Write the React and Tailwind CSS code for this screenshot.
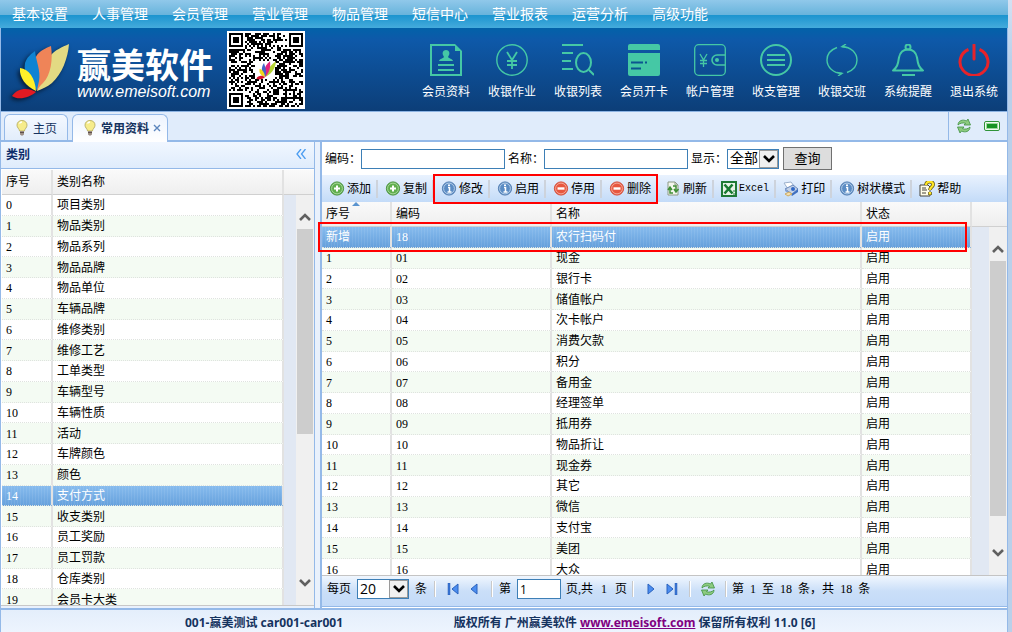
import { useState } from "react";
import clsx from "clsx";

const MENU = ["基本设置", "人事管理", "会员管理", "营业管理", "物品管理", "短信中心", "营业报表", "运营分析", "高级功能"];

const CATEGORIES = [
  "项目类别", "物品类别", "物品系列", "物品品牌", "物品单位", "车辆品牌", "维修类别",
  "维修工艺", "工单类型", "车辆型号", "车辆性质", "活动", "车牌颜色", "颜色", "支付方式",
  "收支类别", "员工奖励", "员工罚款", "仓库类别", "会员卡大类",
];

const PAYMENTS = [
  ["新增", "18", "农行扫码付"],
  ["1", "01", "现金"],
  ["2", "02", "银行卡"],
  ["3", "03", "储值帐户"],
  ["4", "04", "次卡帐户"],
  ["5", "05", "消费欠款"],
  ["6", "06", "积分"],
  ["7", "07", "备用金"],
  ["8", "08", "经理签单"],
  ["9", "09", "抵用券"],
  ["10", "10", "物品折让"],
  ["11", "11", "现金券"],
  ["12", "12", "其它"],
  ["13", "13", "微信"],
  ["14", "14", "支付宝"],
  ["15", "15", "美团"],
  ["16", "16", "大众"],
];

/* ---------- header drawings ---------- */

function Petals({ className }) {
  return (
    <svg viewBox="0 0 60 58" className={className} aria-hidden="true">
      <path d="M28 50C32 36 32 24 41 15 46 9 53 6 60 3 59 17 53 33 43 42 38 46 33 48 28 50Z" fill="#e3da83" />
      <path d="M28 50C24 38 22 22 28 14 32 9 37 7 42 5 44 18 42 34 34 42 31 45 29 47 28 50Z" fill="#ef8458" />
      <path d="M28 49C20 42 14 32 16 22 18 16 22 13 26 10 27 20 32 30 30 40Z" fill="#0e83d2" />
      <path d="M27 50C17 45 10 37 11 27 20 28 26 37 27 50Z" fill="#fff02a" />
      <path d="M27 51C19 46 8 47 3 55 10 60 21 56 27 51Z" fill="#e21a22" />
    </svg>
  );
}

const QR_SIZE = 37;

function finderAt(x, y, fx, fy) {
  const dx = Math.abs(x - fx - 3);
  const dy = Math.abs(y - fy - 3);
  const d = Math.max(dx, dy);
  if (d > 4) return null;
  return d === 3 || d <= 1;
}

function qrPath() {
  let d = "";
  let seed = 2027;
  const far = QR_SIZE - 7;
  for (let y = 0; y < QR_SIZE; y++) {
    for (let x = 0; x < QR_SIZE; x++) {
      seed = (seed * 1103515245 + 12345) % 2147483648;
      let on = seed / 2147483648 > 0.49;
      const finder = finderAt(x, y, 0, 0) ?? finderAt(x, y, far, 0) ?? finderAt(x, y, 0, far);
      const align = Math.max(Math.abs(x - 30), Math.abs(y - 30));
      if (finder !== null) on = finder;
      else if (align <= 2) on = align !== 1;
      else if (x === 6 || y === 6) on = (x + y) % 2 === 0;
      if (x > 12 && x < 23 && y > 13 && y < 23) on = false;
      if (on) d += `M${x} ${y}h1v1h-1z`;
    }
  }
  return d;
}

function QrCode() {
  return (
    <div className="relative size-[78px] shrink-0 bg-white p-0.5">
      <svg viewBox="0 0 37 37" className="size-full" shapeRendering="crispEdges" role="img" aria-label="二维码">
        <path d={qrPath()} fill="#000" />
      </svg>
      <svg viewBox="0 0 60 58" className="absolute top-[29px] left-[29px] size-5" aria-hidden="true">
        <path d="M28 50C36 36 36 18 60 3 59 17 53 38 28 50Z" fill="#b5d334" />
        <path d="M28 50C24 38 22 18 42 3 44 18 42 34 28 50Z" fill="#e5247d" />
        <path d="M28 49C16 40 14 22 24 8 27 20 34 32 28 49Z" fill="#4565c8" />
        <path d="M27 50C14 45 8 37 11 25 20 28 26 37 27 50Z" fill="#f2d81c" />
        <path d="M27 51C19 44 6 45 1 55 10 60 21 56 27 51Z" fill="#d3122b" />
      </svg>
    </div>
  );
}

const GREEN = "#45c8a5";

const QUICK = [
  {
    label: "会员资料",
    icon: (
      <g fill="none" stroke={GREEN} strokeWidth="2">
        <path d="M25 1H1v30h30V7" />
        <path d="M25 0v7h7z" fill={GREEN} stroke="none" />
        <path d="M16 6c3 0 4 3 3 5l-1 2c1 2 4 1 5 4H9c1-3 4-2 5-4l-1-2c-1-2 0-5 3-5z" fill={GREEN} stroke="none" />
        <path d="M8 21h16M8 26h16" />
      </g>
    ),
  },
  {
    label: "收银作业",
    icon: (
      <g fill="none" stroke={GREEN}>
        <circle cx="16" cy="16" r="15.2" strokeWidth="1.4" />
        <path d="M11 8l5 8 5-8M16 16v9M11 17h10M11 21h10" strokeWidth="1.8" />
      </g>
    ),
  },
  {
    label: "收银列表",
    icon: (
      <g fill="none" stroke={GREEN} strokeWidth="2">
        <path d="M0 1h21M0 9h11M0 17h9M0 25h11" />
        <ellipse cx="21.500" cy="18.500" rx="7.500" ry="9.500" />
        <path d="M27 26l5 5" />
      </g>
    ),
  },
  {
    label: "会员开卡",
    icon: (
      <g>
        <path d="M2 0h28a2 2 0 0 1 2 2v4H0V2a2 2 0 0 1 2-2zM0 9h32v21a2 2 0 0 1-2 2H2a2 2 0 0 1-2-2z" fill={GREEN} />
        <path d="M3 18.500h12M17 18.500h2M3 24.500h10" stroke="#0b5590" strokeWidth="2" />
      </g>
    ),
  },
  {
    label: "帐户管理",
    icon: (
      <g fill="none" stroke={GREEN} strokeWidth="1.3">
        <rect x="0.700" y="0.700" width="30.600" height="30.600" rx="4" />
        <path d="M31 11h-8a5 5 0 0 0 0 10h8" strokeWidth="1.6" />
        <circle cx="23" cy="16" r="2" fill={GREEN} stroke="none" />
        <path d="M6 10l3.500 6 3.500-6M9.500 16v7M6 16.500h7M6 19.500h7" />
      </g>
    ),
  },
  {
    label: "收支管理",
    icon: (
      <g fill="none" stroke={GREEN} strokeWidth="2">
        <circle cx="16" cy="16" r="15" />
        <path d="M7 11h18M7 16h18M7 21h18" />
      </g>
    ),
  },
  {
    label: "收银交班",
    icon: (
      <g fill="none" stroke={GREEN} strokeWidth="1.400">
        <path d="M11 3.500C4 6 1 11 1 16c0 7 6 13 15 13.500M21 28.500c7-2.500 10-7.500 10-12.500C31 9 25 3 16 2.500" />
        <path d="M20 0l-4 2.600 5 1M12 32l4-2.600-5-1" />
      </g>
    ),
  },
  {
    label: "系统提醒",
    icon: (
      <g fill="none" stroke={GREEN} strokeWidth="2">
        <circle cx="16" cy="3" r="2.500" />
        <path d="M1 26.500c4-3 5-6 6-13 1-5 4-8 9-8s8 3 9 8c1 7 2 10 6 13z" strokeLinejoin="round" />
        <path d="M10 31h13" />
      </g>
    ),
  },
  {
    label: "退出系统",
    icon: (
      <g fill="none" stroke="#e8232a" strokeWidth="3">
        <path d="M10.500 5.500a14 13.500 0 1 0 11 0" />
        <path d="M16 1v14" strokeLinecap="round" />
      </g>
    ),
  },
];

/* ---------- 16px icons ---------- */

function Icon16({ children }) {
  return (
    <svg viewBox="0 0 16 16" className="size-4 shrink-0" aria-hidden="true">
      {children}
    </svg>
  );
}

const AddIcon = () => (
  <Icon16>
    <circle cx="8" cy="7.500" r="6.600" fill="#5fae4d" stroke="#4b9440" />
    <circle cx="8" cy="7.500" r="5.400" fill="none" stroke="#a8d79b" />
    <path d="M8 4.500v6M5 7.500h6" stroke="#fff" strokeWidth="2" />
  </Icon16>
);

const InfoIcon = () => (
  <Icon16>
    <circle cx="8" cy="7.500" r="6.600" fill="#5b8cc4" stroke="#5580b4" />
    <circle cx="8" cy="7.500" r="5.400" fill="none" stroke="#b4cde8" />
    <path d="M7 6.500h1.500V11M6.500 11h4M7 4.200h2" stroke="#fff" strokeWidth="1.500" fill="none" />
  </Icon16>
);

const StopIcon = () => (
  <Icon16>
    <circle cx="8" cy="7.500" r="6.600" fill="#e8573f" stroke="#d4503c" />
    <circle cx="8" cy="7.500" r="5.400" fill="none" stroke="#f5a899" />
    <path d="M4.500 7.500h7" stroke="#fff" strokeWidth="2.400" />
  </Icon16>
);

const ReloadIcon = () => (
  <Icon16>
    <path d="M3 1h7l3 3v10H3z" fill="#f3f6ee" stroke="#8d9a84" />
    <path d="M10 1v3h3" fill="none" stroke="#8d9a84" />
    <path d="M8 12H5V7M3 9l2-3 2 3M8 5h3v5M9 8l2 3 2.500-3" fill="none" stroke="#3f8e35" strokeWidth="1.500" />
  </Icon16>
);

const ExcelIcon = () => (
  <Icon16>
    <path d="M0 0h16v16H0z" fill="#1f7a36" />
    <path d="M2 2h12v12H2z" fill="#e8f3e8" />
    <path d="M3.500 3.500l8 9M11.500 3.500l-8 9" stroke="#187a30" strokeWidth="2.600" />
    <path d="M12 10h3M12 13h3" stroke="#1f7a36" />
  </Icon16>
);

const PrintIcon = () => (
  <Icon16>
    <path d="M1 2l7-1 3 4-6 3z" fill="#fff" stroke="#9bb0cc" />
    <path d="M2 8l8-4 5 4-6 5z" fill="#c4d2e8" stroke="#6787bb" />
    <path d="M9 13l6-5v3l-6 4z" fill="#3e6fc0" />
    <path d="M2 8l7 5v2L2 10z" fill="#7fa0d6" />
    <path d="M2 13l4-2 3 2-4 2z" fill="#f4dfae" stroke="#ceab62" />
    <circle cx="10" cy="8" r="2" fill="#3068c6" />
  </Icon16>
);

const HelpIcon = () => (
  <Icon16>
    <path d="M1 4h8l2 2v9H1z" fill="#fffde8" stroke="#44433a" />
    <path d="M3 7h4M3 9h5M3 12h4" stroke="#44433a" />
    <path d="M7 4c0-5 8-4 7 0-.5 2-3 2.500-3 5M11 11v3" fill="none" stroke="#5c5210" strokeWidth="3.600" />
    <path d="M7 4c0-5 8-4 7 0-.5 2-3 2.500-3 5M11 11v2.500" fill="none" stroke="#ffe526" strokeWidth="2.200" />
  </Icon16>
);

const CycleIcon = () => (
  <Icon16>
    <path d="M2 7C2 2.500 7 1 10.500 3L12 1l2.500 6H8l1.500-1.700C7 4.500 4 5 2 7z" fill="#8dcb80" stroke="#3f9140" strokeWidth="0.800" />
    <path d="M14 9c0 4.500-5 6-8.500 4L4 15 1.500 9H8l-1.500 1.700c2.500.8 5.500.3 7.500-1.700z" fill="#8dcb80" stroke="#3f9140" strokeWidth="0.800" />
  </Icon16>
);

const BulbIcon = () => (
  <Icon16>
    <path d="M8 .5c3 0 5 2 5 4.700 0 2.500-2.300 3.500-2.600 5.800H5.600C5.300 8.700 3 7.700 3 5.200 3 2.500 5 .5 8 .5z" fill="#f6ec8b" stroke="#bdb56c" />
    <path d="M5.500 3.500c.6-1.200 1.500-1.500 2.500-1.500" stroke="#fff" strokeWidth="1.500" fill="none" />
    <path d="M6 11h4v3.500c-1 1.500-3 1.500-4 0z" fill="#9c8f86" />
    <path d="M6 12.500h4" stroke="#5d504b" />
  </Icon16>
);

function PageIcon({ bar, flip }) {
  return (
    <svg viewBox="0 0 12 12" className={clsx("size-3", flip && "-scale-x-100")} aria-hidden="true">
      {bar && <path d="M1 0h2v12H1z" fill="#3a78d8" stroke="#285bb0" strokeWidth="0.500" />}
      <path d={bar ? "M11 1v10L5 6z" : "M9 1v10L3 6z"} fill="#4b8df0" stroke="#2a62bd" />
    </svg>
  );
}

function Chevron({ up }) {
  return (
    <svg viewBox="0 0 12 8" className="h-2 w-3" aria-hidden="true">
      <path d={up ? "M1 7l5-5 5 5" : "M1 1l5 5 5-5"} fill="none" stroke="currentColor" strokeWidth="2.600" />
    </svg>
  );
}

/* ---------- shared pieces ---------- */

function SelectBox({ id, value, className }) {
  return (
    <div className={clsx("relative h-5 border border-[#3d7fb6] bg-white", className)}>
      <select id={id} defaultValue={value} className="block size-full appearance-none pl-0.5 text-sm leading-[18px] outline-none">
        <option>{value}</option>
      </select>
      <span className="pointer-events-none absolute inset-y-0 right-0 flex w-[19px] items-center justify-center border border-[#9a9a9a] bg-[#f0f0f0] text-black">
        <Chevron />
      </span>
    </div>
  );
}

// strip to the right of a grid: header cap, filler column and scroll bar
function ScrollSide({ thumb, className }) {
  return (
    <div className={clsx("flex shrink-0 flex-col", className)}>
      <div className="h-[25px] border-b border-[#d0d0d0] bg-gradient-to-b from-[#fafafa] to-[#eeeeee]" />
      <div className="flex flex-1 justify-end bg-[#e1e8f3]">
        <div className="flex w-[18px] flex-col bg-[#f0f0f0] px-px py-2.5 text-[#606060]">
          <button aria-label="向上" className="flex h-6 items-center justify-center">
            <Chevron up />
          </button>
          <div className="flex-1">
            <div className="bg-[#cdcdcd]" style={{ height: `${thumb}%` }} />
          </div>
          <button aria-label="向下" className="flex h-6 items-center justify-center">
            <Chevron />
          </button>
        </div>
      </div>
    </div>
  );
}

const TH = "h-[25px] border-b border-[#d0d0d0] p-0 pl-1 text-left font-normal";
const TD = "border-b border-dotted border-[#dfe3df] p-0 pt-px pl-1 leading-4";
const SEP = "border-r-2 border-r-[#e2e2e2] [border-right-style:solid]";
const SELECTED =
  "text-white bg-[repeating-linear-gradient(90deg,rgba(255,255,255,0.08)_0_1px,transparent_1px_3px),linear-gradient(#86bbee,#649fdb)]";

function rowClass(index, selected) {
  if (selected) return SELECTED;
  return index % 2 ? "bg-[#f4fbf3]" : "bg-white";
}

function ToolButton({ icon, children, last, wide }) {
  return (
    <button
      className={clsx(
        "flex h-[18px] shrink-0 items-center gap-0.5 pr-[5px] pl-[7px] whitespace-nowrap",
        !last && "border-r-2 border-[#cdd3dc]"
      )}
    >
      {icon}
      <span className={clsx(wide && "font-['Liberation_Mono',monospace] text-[10px]")}>{children}</span>
    </button>
  );
}

/* ---------- page parts ---------- */

function TopBar() {
  return (
    <nav className="flex h-7 shrink-0 items-center gap-6 bg-[linear-gradient(#90c8ea,#68b4dc_52%,#1b94cf_54%,#45abdc)] px-3 pb-0.5 font-['Noto_Sans_CJK_SC',sans-serif] text-sm leading-5 text-white">
      {MENU.map((item) => (
        <a key={item} href="#" className="whitespace-nowrap">
          {item}
        </a>
      ))}
    </nav>
  );
}

function Banner() {
  return (
    <header className="flex h-[84px] shrink-0 items-center justify-between border-b border-[#8db4e3] bg-[linear-gradient(#0262a9,#0e59a9_14%,#0c3e78)] pr-[9px] pl-2">
      <div className="flex items-center">
        <Petals className="h-[58px] w-[60px] drop-shadow-[-2px_2px_2px_rgba(0,0,0,0.6)]" />
        <div className="mr-3 ml-2 w-[138px] pt-1 whitespace-nowrap text-white">
          <div className="font-['Noto_Sans_CJK_SC',sans-serif] text-[34px] leading-10 font-bold">赢美软件</div>
          <div className="font-['Liberation_Sans',sans-serif] text-base leading-4 italic">www.emeisoft.com</div>
        </div>
        <QrCode />
      </div>
      <div className="flex gap-[18px] pt-[3px] font-['Noto_Sans_CJK_SC',sans-serif] text-xs text-white">
        {QUICK.map((q) => (
          <button key={q.label} className="flex w-12 flex-col items-center gap-[7px] whitespace-nowrap">
            <svg viewBox="0 0 32 32" className="size-8" aria-hidden="true">
              {q.icon}
            </svg>
            <span className="leading-4">{q.label}</span>
          </button>
        ))}
      </div>
    </header>
  );
}

function TabBar() {
  return (
    <div className="flex h-[30px] shrink-0 items-end justify-between border-b-2 border-[#94b9e8] bg-[#e0ecfb] pl-[3px] font-['Noto_Sans_CJK_SC',sans-serif] text-[#15335f]">
      <div className="flex gap-1">
        <button className="flex h-[26px] items-center gap-[3px] rounded-t-md border border-b-0 border-[#94b9e8] bg-gradient-to-b from-[#f4f9ff] to-[#e2edfb] pr-2.5 pl-[9px]">
          <BulbIcon />
          主页
        </button>
        <div className="-mb-0.5 flex h-7 items-center gap-1 rounded-t-md border border-b-0 border-[#94b9e8] bg-gradient-to-b from-[#edf4fe] to-white pr-1.5 pb-0.5 pl-[9px]">
          <button className="flex items-center gap-[3px] font-bold">
            <BulbIcon />
            常用资料
          </button>
          <button aria-label="关闭" className="text-[#5c86bd]">
            <svg viewBox="0 0 8 8" className="size-2">
              <path d="M1 1l6 6M7 1l-6 6" stroke="currentColor" strokeWidth="1.400" />
            </svg>
          </button>
        </div>
      </div>
      <div className="flex h-full items-center gap-3 border-l border-[#94b9e8] px-[7px]">
        <button aria-label="刷新">
          <CycleIcon />
        </button>
        <button aria-label="全屏" className="flex h-2.5 w-4 rounded-xs border border-[#2f9339] bg-[#f2fbf1] p-px">
          <span className="size-full border border-[#9bd99c] bg-[#169323]" />
        </button>
      </div>
    </div>
  );
}

function CategoryPanel() {
  const [active, setActive] = useState(14);
  return (
    <section className="flex w-[314px] shrink-0 flex-col border-r border-[#94b9e8]">
      <div className="flex h-[27px] shrink-0 items-center justify-between border-b border-[#94b9e8] bg-gradient-to-b from-[#f1f7ff] to-[#dfecfc] pr-2 pb-0.5 pl-[5px] text-[#0e2d6a]">
        <h2 className="font-['Noto_Sans_CJK_SC',sans-serif] font-bold">类别</h2>
        <button aria-label="收起">
          <svg viewBox="0 0 10 10" className="size-2.5">
            <path d="M5 0L1 5l4 5M9.500 0l-4 5 4 5" fill="none" stroke="#4b9cf0" strokeWidth="1.300" />
          </svg>
        </button>
      </div>
      <div className="mb-0.5 flex min-h-0 flex-1 border-b border-[#c8c8c8] bg-white pt-px pl-px">
        <div className="min-w-0 flex-1 overflow-hidden">
          <table className="h-[440px] w-full table-fixed border-separate border-spacing-0">
            <colgroup>
              <col className="w-[51px]" />
              <col />
            </colgroup>
            <thead className="bg-gradient-to-b from-[#fafafa] to-[#eeeeee]">
              <tr>
                <th className={clsx(TH, SEP)}>序号</th>
                <th className={clsx(TH, SEP)}>类别名称</th>
              </tr>
            </thead>
            <tbody>
              {CATEGORIES.map((name, i) => (
                <tr key={name} onClick={() => setActive(i)} className={rowClass(i, i === active)}>
                  <td className={clsx(TD, SEP)}>{i}</td>
                  <td className={clsx(TD, SEP)}>{name}</td>
                </tr>
              ))}
            </tbody>
          </table>
        </div>
        <ScrollSide thumb={60} className="w-[30px]" />
      </div>
    </section>
  );
}

function QueryForm() {
  return (
    <form className="flex h-[33px] shrink-0 items-center bg-white pl-[3px] whitespace-nowrap" onSubmit={(e) => e.preventDefault()}>
      <label htmlFor="code">编码：</label>
      <input id="code" className="mr-[3px] h-5 w-36 border border-[#3d7fb6] bg-white px-1 outline-none" />
      <label htmlFor="name">名称：</label>
      <input id="name" className="mr-[3px] h-5 w-36 border border-[#3d7fb6] bg-white px-1 outline-none" />
      <label htmlFor="show">显示：</label>
      <SelectBox id="show" value="全部" className="mr-1 w-13" />
      <button type="submit" className="h-[23px] w-[49px] border border-[#707070] bg-[#dddddd] text-[13px] leading-5">
        查询
      </button>
    </form>
  );
}

function Toolbar() {
  return (
    <div className="flex h-[27px] shrink-0 items-center bg-gradient-to-b from-[#e9f2fe] to-[#c3dbf8]">
      <ToolButton icon={<AddIcon />}>添加</ToolButton>
      <ToolButton icon={<AddIcon />}>复制</ToolButton>
      <div className="relative z-10 flex">
        <ToolButton icon={<InfoIcon />}>修改</ToolButton>
        <ToolButton icon={<InfoIcon />}>启用</ToolButton>
        <ToolButton icon={<StopIcon />}>停用</ToolButton>
        <ToolButton icon={<StopIcon />}>删除</ToolButton>
        <span className="pointer-events-none absolute -inset-y-1.5 right-0 -left-px border-2 border-[#ff0000]" />
      </div>
      <ToolButton icon={<ReloadIcon />}>刷新</ToolButton>
      <ToolButton icon={<ExcelIcon />} wide>
        Excel
      </ToolButton>
      <ToolButton icon={<PrintIcon />}>打印</ToolButton>
      <ToolButton icon={<InfoIcon />}>树状模式</ToolButton>
      <ToolButton icon={<HelpIcon />} last>
        帮助
      </ToolButton>
    </div>
  );
}

function Grid() {
  return (
    <div className="relative flex min-h-0 flex-1">
      <div className="min-w-0 flex-1 overflow-hidden">
        <table className="h-[378px] w-full table-fixed border-separate border-spacing-0">
          <colgroup>
            <col className="w-[70px]" />
            <col className="w-40" />
            <col />
            <col className="w-[110px]" />
          </colgroup>
          <thead className="bg-gradient-to-b from-[#fafafa] to-[#eeeeee]">
            <tr>
              <th className={clsx(TH, SEP, "relative")} aria-sort="ascending">
                序号
                <span className="absolute top-0 left-[30px] border-4 border-t-0 border-transparent border-b-[#5a94cf]" />
              </th>
              <th className={clsx(TH, SEP)}>编码</th>
              <th className={clsx(TH, SEP)}>名称</th>
              <th className={clsx(TH, SEP)}>状态</th>
            </tr>
          </thead>
          <tbody>
            {PAYMENTS.map(([no, code, name], i) => (
              <tr key={code + name} className={rowClass(i, i === 0)}>
                <td className={clsx(TD, SEP)}>{no}</td>
                <td className={clsx(TD, SEP)}>{code}</td>
                <td className={clsx(TD, SEP)}>{name}</td>
                <td className={clsx(TD, SEP)}>启用</td>
              </tr>
            ))}
          </tbody>
        </table>
      </div>
      <ScrollSide thumb={91} className="w-[35px]" />
      <span className="pointer-events-none absolute top-5 right-10 -left-1 h-[30px] border-2 border-[#ff0000]" />
    </div>
  );
}

function Divider() {
  return <span className="h-4 w-0.5 shrink-0 border-l border-[#c9c9c9] bg-white" />;
}

function Pager() {
  return (
    <div className="mb-px flex h-8 shrink-0 items-center border-y border-t-[#c4c4c4] border-b-[#94b9e8] bg-gradient-to-b from-[#f0f6fe] via-[#cadff8] to-[#c3daf8] pb-1 pl-[5px] whitespace-nowrap">
      <label htmlFor="size">每页</label>
      <SelectBox id="size" value="20" className="mx-1.5 w-13 font-['Open_Sans',sans-serif]" />
      <span>条</span>
      <div className="ml-[7px] flex items-center gap-[11px]">
        <Divider />
        <div className="flex gap-[9px]">
          <button aria-label="首页">
            <PageIcon bar />
          </button>
          <button aria-label="上一页">
            <PageIcon />
          </button>
        </div>
        <Divider />
      </div>
      <label htmlFor="page" className="mx-1.5">第</label>
      <input id="page" defaultValue="1" className="h-5 w-11 border border-[#3d7fb6] bg-white px-0.5 font-['Open_Sans',sans-serif] text-xs outline-none" />
      <div className="mx-[5px] flex gap-2">
        <span>页,共</span>
        <span>1</span>
        <span>页</span>
      </div>
      <div className="flex items-center gap-[11px]">
        <Divider />
        <div className="flex gap-[9px]">
          <button aria-label="下一页">
            <PageIcon flip />
          </button>
          <button aria-label="末页">
            <PageIcon bar flip />
          </button>
        </div>
        <Divider />
      </div>
      <div className="ml-[9px] flex items-center gap-[9px]">
        <button aria-label="刷新列表">
          <CycleIcon />
        </button>
        <Divider />
      </div>
      <div className="ml-[5px] flex gap-1.5">
        <span>第</span>
        <span>1</span>
        <span>至</span>
        <span>18</span>
        <span>条，共</span>
        <span>18</span>
        <span>条</span>
      </div>
    </div>
  );
}

function Footer() {
  return (
    <footer className="flex h-6 shrink-0 items-center border-t-2 border-[#94b9e8] bg-gradient-to-b from-[#e4eefb] to-[#edf4fe] pt-1 font-['Noto_Sans','Noto_Sans_CJK_SC',sans-serif] leading-4 font-bold whitespace-nowrap text-[#15335f]">
      <p className="w-[45%] pl-46">001-赢美测试 car001-car001</p>
      <p>
        版权所有 广州赢美软件{" "}
        <a href="#" className="text-[#800080] underline">
          www.emeisoft.com
        </a>{" "}
        保留所有权利 11.0 [6]
      </p>
    </footer>
  );
}

export default function App() {
  return (
    <div className="flex h-screen min-w-[1000px] overflow-hidden bg-[#b9d0ea] font-['Liberation_Serif','Noto_Sans_CJK_SC',serif] text-xs leading-4 text-black">
      <div className="flex min-w-0 flex-1 flex-col">
        <TopBar />
        <div className="flex min-h-0 flex-1 flex-col border-x border-[#94b9e8]">
          <Banner />
          <TabBar />
          <main className="flex min-h-0 flex-1 gap-[5px] bg-[#e9f1fc]">
            <CategoryPanel />
            <section className="flex min-w-0 flex-1 flex-col border-l-2 border-[#94b9e8] bg-white">
              <QueryForm />
              <Toolbar />
              <Grid />
              <Pager />
            </section>
          </main>
          <Footer />
        </div>
      </div>
      <div className="w-1 shrink-0 bg-gradient-to-b from-[#d3e1f3] to-[#b9d0ea] to-10%" />
    </div>
  );
}
